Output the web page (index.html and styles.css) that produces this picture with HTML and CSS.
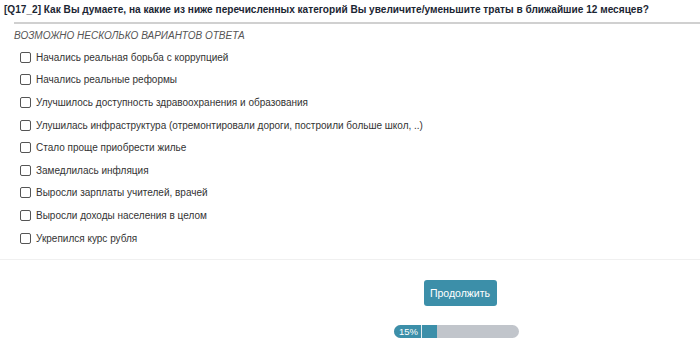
FILE: index.html
```
<!DOCTYPE html>
<html lang="ru">
<head>
    <meta charset="UTF-8">
    <title>Опрос</title>
    <link rel="stylesheet" href="styles.css">
</head>
<body>
    <div class="question">
        <h1 class="q-title">[Q17_2] Как Вы думаете, на какие из ниже перечисленных категорий Вы увеличите/уменьшите траты в ближайшие 12 месяцев?</h1>
        <div class="q-body">
            <p class="hint">ВОЗМОЖНО НЕСКОЛЬКО ВАРИАНТОВ ОТВЕТА</p>
            <ul class="options">
                <li><label><input type="checkbox"> Начались реальная борьба с коррупцией</label></li>
                <li><label><input type="checkbox"> Начались реальные реформы</label></li>
                <li><label><input type="checkbox"> Улучшилось доступность здравоохранения и образования</label></li>
                <li><label><input type="checkbox"> Улушилась инфраструктура (отремонтировали дороги, построили больше школ, ..)</label></li>
                <li><label><input type="checkbox"> Стало проще приобрести жилье</label></li>
                <li><label><input type="checkbox"> Замедлилась инфляция</label></li>
                <li><label><input type="checkbox"> Выросли зарплаты учителей, врачей</label></li>
                <li><label><input type="checkbox"> Выросли доходы населения в целом</label></li>
                <li><label><input type="checkbox"> Укрепился курс рубля</label></li>
            </ul>
        </div>
    </div>

    <div class="footer">
        <button class="next-btn">Продолжить</button>
        <div class="progress">
            <span class="progress-label">15%</span>
            <span class="progress-fill"></span>
        </div>
    </div>
</body>
</html>
```

FILE: styles.css
```
* {
    box-sizing: border-box;
    margin: 0;
    padding: 0;
}

body {
    font-family: 'Liberation Sans', Arial, sans-serif;
    color: #333;
    background: #fff;
    width: 700px;
}
.question {
    padding: 0 0 10px 4px;
    border-bottom: 1px solid #f0f0f0;
}
.q-title {
    font-size: 10.1px;
    font-weight: bold;
    color: #1b2633;
    line-height: 15px;
    padding-top: 2px;
    padding-bottom: 5px;
    white-space: nowrap;
}
.q-body {
    margin-left: 10px;
    border-top: 2px solid #d0d0d0;
}
.hint {
    font-size: 10px;
    font-style: italic;
    color: #555;
    margin-top: 5px;
    line-height: 14px;
}
.options {
    list-style: none;
    margin-top: 3px;
    padding-left: 6px;
}
.options li {
    height: 22.6px;
    display: flex;
    align-items: center;
}
.options label {
    display: flex;
    align-items: center;
    font-size: 10px;
    color: #333;
}
.options input {
    width: 11px;
    height: 11px;
    margin: 0 5px 0 0;
    appearance: none;
    border: 1.5px solid #555;
    border-radius: 2px;
    background: #fff;
}
.footer {
    display: flex;
    flex-direction: column;
    align-items: center;
    padding-left: 220px;
    padding-top: 20px;
}
.next-btn {
    background: #3c8fa9;
    color: #fff;
    border: none;
    border-radius: 3px;
    font-family: inherit;
    font-size: 10.5px;
    width: 73px;
    height: 26px;
}
.progress {
    margin-top: 19px;
    margin-left: -7px;
    width: 125px;
    height: 13px;
    background: #c1c5cb;
    border-radius: 7px;
    overflow: hidden;
    display: flex;
}
.progress-label {
    background: #3c8fa9;
    color: #fff;
    font-size: 9.5px;
    line-height: 13px;
    width: 28px;
    padding-left: 5px;
    border-right: 1px solid #e6eef1;
}
.progress-fill {
    background: #3c8fa9;
    width: 15px;
}
```
